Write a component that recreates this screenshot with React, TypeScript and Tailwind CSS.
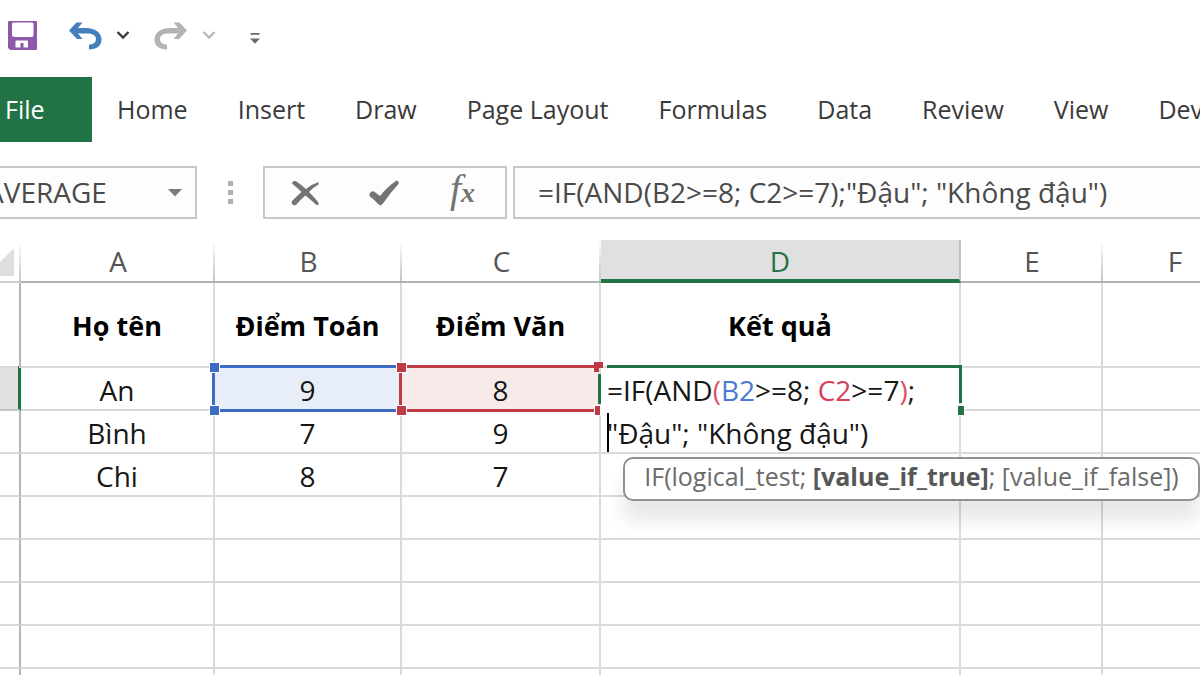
import type { ReactNode } from "react";

const tabs = ["Home", "Insert", "Draw", "Page Layout", "Formulas", "Data", "Review", "View", "Developer"];

const columns = ["A", "B", "C", "D", "E", "F"];

const students = [
  { name: "An", math: 9, literature: 8 },
  { name: "Bình", math: 7, literature: 9 },
  { name: "Chi", math: 8, literature: 7 },
];

const blankRows = [5, 6, 7, 8, 9, 10, 11, 12, 13, 14, 15, 16];

function Chevron({ className }: { className: string }) {
  return (
    <svg viewBox="0 0 14 10" className={`h-[10px] w-[14px] ${className}`} fill="none" stroke="currentColor" strokeWidth="2.4" aria-hidden="true">
      <path d="M1.500 1 7 6.500 12.500 1" />
    </svg>
  );
}

function CurvedArrow({ className }: { className: string }) {
  return (
    <svg viewBox="0 0 33 28" className={`h-7 w-[33px] ${className}`} fill="currentColor" aria-hidden="true">
      <path d="M0 8.500 7.500 0.500H13.500L9 6H17C26.500 6 32.500 11 32.500 17.500C32.500 24 27.500 27.500 20 27.500V22.500C24.500 22.500 27 20.500 27 17C27 13.500 24 11.500 17.500 11.500H9L13.500 17H8Z" />
    </svg>
  );
}

function QuickAccess() {
  return (
    <div className="flex h-[77px] shrink-0 items-center pb-[6px] pl-2">
      <button aria-label="Save" className="flex">
        <svg viewBox="0 0 29 29" className="size-[29px]" aria-hidden="true">
          <path fill="#8e58ab" fillRule="evenodd" d="M1 0h27a1 1 0 0 1 1 1v27a1 1 0 0 1-1 1H2.500L0 27V1a1 1 0 0 1 1-1ZM5.500 1.500Q4 1.500 4 3V14Q4 16 6 16H23.500Q25.500 16 25.500 14V3Q25.500 1.500 24 1.500ZM8.500 19.500Q7.500 19.500 7.500 20.500V26.500H12.500V22H15.500V26.500H20V20.500Q20 19.500 19 19.500Z" />
        </svg>
      </button>
      <button aria-label="Undo" className="ml-8 flex">
        <CurvedArrow className="text-[#447ebd]" />
      </button>
      <button aria-label="Undo history" className="ml-[14px] flex">
        <Chevron className="text-[#3b3b3b]" />
      </button>
      <button aria-label="Redo" className="ml-6 flex">
        <CurvedArrow className="-scale-x-100 text-[#b3b3b3]" />
      </button>
      <button aria-label="Redo history" className="ml-[15px] flex">
        <Chevron className="text-[#b9b9b9]" />
      </button>
      <button aria-label="Customize toolbar" className="ml-[34px] flex pt-[6px]">
        <svg viewBox="0 0 10 11" className="h-[11px] w-[10px]" fill="#6b6b6b" aria-hidden="true">
          <path d="M0.500 0h9v1.800h-9ZM0 5.500h10L5 10.800Z" />
        </svg>
      </button>
    </div>
  );
}

function Ribbon() {
  return (
    <nav className="flex h-[65px] shrink-0 items-stretch overflow-hidden text-[25px] text-[#3a3a3a]">
      <button className="w-[92px] shrink-0 bg-[#217346] pl-[5px] text-left text-white">File</button>
      {tabs.map((tab) => (
        <button key={tab} className="shrink-0 whitespace-nowrap px-[25px]">
          {tab}
        </button>
      ))}
    </nav>
  );
}

function FormulaBar() {
  return (
    <div className="mt-6 flex h-[53px] shrink-0 text-[28px] text-[#4a4a4a]">
      <div className="flex w-[197px] shrink-0 items-center justify-between overflow-hidden border-2 border-l-0 border-[#c8c8c8] bg-[#fdfdfd] pr-[13px]">
        <input aria-label="Name box" defaultValue="AVERAGE" className="-ml-[14px] w-[140px] bg-transparent pb-[2px] outline-none" />
        <button aria-label="Show names">
          <svg viewBox="0 0 14 8" className="h-2 w-[14px]" fill="#7a7a7a" aria-hidden="true">
            <path d="M0 0h14L7 7.500Z" />
          </svg>
        </button>
      </div>
      <div className="flex w-[66px] shrink-0 flex-col items-center justify-center gap-1">
        <span className="size-[5px] bg-[#b0b0b0]" />
        <span className="size-[5px] bg-[#b0b0b0]" />
        <span className="size-[5px] bg-[#b0b0b0]" />
      </div>
      <div className="flex w-[244px] shrink-0 items-center border-2 border-[#c8c8c8] bg-[#fdfdfd] pr-[3px] text-[#747474]">
        <button aria-label="Cancel" className="flex flex-1 justify-center">
          <svg viewBox="0 0 28 26" className="h-[26px] w-7" fill="currentColor" aria-hidden="true">
            <path d="M1 3.500C1.500 1 3.500 0.500 5.500 1.500Q10.500 5 15 9Q20 4.500 27.500 2V4.500Q22 7.500 18 12Q23 17 27.500 22.500V25H25.500Q20 20 14.500 15.500Q9 20 5.500 24.500Q3.500 26 1.500 24.500Q0 23 1 21Q6 16 10.500 12Q6 7.500 1 3.500Z" />
          </svg>
        </button>
        <button aria-label="Enter" className="flex flex-1 justify-center">
          <svg viewBox="0 0 30 26" className="h-[26px] w-[30px]" fill="currentColor" aria-hidden="true">
            <path d="M0.500 14Q1.500 10.500 5 11.500L11 16Q18 7 27.500 0.500Q30.500 1 29.500 4Q21 13 14 23.500L11.500 25.500L9 24Q5 19.500 0.500 16Z" />
          </svg>
        </button>
        <button aria-label="Insert function" className="flex flex-1 items-baseline justify-center pb-1 font-['Liberation_Serif',serif] italic">
          <span className="text-[40px] leading-9">f</span>
          <span className="text-[28px] font-bold leading-9">x</span>
        </button>
      </div>
      <input
        aria-label="Formula"
        defaultValue={'=IF(AND(B2>=8; C2>=7);"Đậu"; "Không đậu")'}
        className="ml-[6px] min-w-0 flex-1 border-2 border-r-0 border-[#c8c8c8] bg-[#fdfdfd] pb-[2px] pl-[23px] outline-none"
      />
    </div>
  );
}

function Handles({ color, right }: { color: string; right?: boolean }) {
  return (
    <>
      <span className={`absolute -left-[6px] -top-[6px] z-20 size-[11px] border border-white ${color}`} />
      <span className={`absolute -bottom-[7px] -left-[6px] z-20 size-[11px] border border-white ${color}`} />
      {right && (
        <>
          <span className={`absolute -right-1 -top-[6px] z-20 h-[6px] w-[9px] ${color}`} />
          <span className={`absolute right-0 -top-[6px] z-20 h-[10px] w-[5px] ${color}`} />
          <span className={`absolute -bottom-[7px] -right-[2px] z-20 h-[11px] w-[7px] border border-white ${color}`} />
        </>
      )}
    </>
  );
}

function Cell({ children, className = "" }: { children?: ReactNode; className?: string }) {
  return <td className={`relative border-b-2 border-r-2 border-[#dadada] p-0 pt-1 text-center ${className}`}>{children}</td>;
}

function RowHeader({ active = false }: { active?: boolean }) {
  return active ? (
    <th className="relative border-b-2 border-r-2 border-b-[#c4c4c4] border-r-[#217346] bg-[#e0e0e0] p-0">
      <span className="absolute -top-[2px] bottom-0 right-0 w-px bg-[#217346]" />
    </th>
  ) : (
    <th className="border-b-2 border-r-2 border-b-[#dadada] border-r-[#b5b5b5] p-0" />
  );
}

function CellEditor() {
  return (
    <>
      <div
        role="textbox"
        aria-label="Cell D2"
        className="absolute left-0 right-0 top-0 z-10 h-[84px] whitespace-nowrap bg-white pl-[6px] pt-px text-left leading-[43px]"
      >
        <div>
          =IF(AND<span className="text-[#e0526a]">(</span>
          <span className="text-[#4a7bd4]">B2</span>&gt;=8; <span className="text-[#d8405a]">C2</span>&gt;=7
          <span className="text-[#e0526a]">)</span>;
        </div>
        <div>"Đậu"; "Không đậu")</div>
        <span className="absolute bottom-0 left-[6px] h-[39px] w-[2px] bg-black" />
      </div>
      <span className="pointer-events-none absolute -right-[3px] -top-[3px] bottom-[6px] left-[6px] z-20 border-r-[3px] border-t-[3px] border-[#217346]" />
      <span className="absolute -left-[3px] bottom-[5px] top-[6px] z-20 w-[3px] bg-[#217346]" />
      <span className="absolute -bottom-[7px] -right-[6px] z-20 h-[11px] w-[8px] border border-white bg-[#217346]" />
      <div
        role="tooltip"
        className="absolute left-[22px] top-[89px] z-30 flex h-[44px] w-[577px] items-center justify-center whitespace-nowrap rounded-[10px] border-2 border-[#919191] bg-white pb-[5px] text-[25px] text-[#6b6b6b] shadow-[0_20px_18px_0_rgba(0,0,0,0.09)]"
      >
        <span>
          IF(logical_test; <b className="text-[#575757]">[value_if_true]</b>; [value_if_false])
        </span>
      </div>
    </>
  );
}

function Sheet() {
  return (
    <div className="mt-[21px] min-h-0 flex-1 overflow-hidden">
      <table className="w-full min-w-[1247px] table-fixed border-separate border-spacing-0 text-[28px] text-[#161616]">
        <colgroup>
          <col className="w-[21px]" />
          <col className="w-[194px]" />
          <col className="w-[187px]" />
          <col className="w-[199px]" />
          <col className="w-[360px]" />
          <col className="w-[142px]" />
          <col />
        </colgroup>
        <thead>
          <tr className="h-[43px] text-[#555]">
            <th className="relative border-b-2 border-[#cfcfcf] p-0">
              <svg viewBox="0 0 28 28" className="absolute bottom-[5px] right-[7px] size-7" aria-hidden="true">
                <path fill="#dedede" d="M28 0V28H0Z" />
              </svg>
              <span className="absolute bottom-0 right-0 top-0 w-[2px] bg-linear-to-b from-white to-[#c8c8c8]" />
            </th>
            {columns.map((column) =>
              column === "D" ? (
                <th key={column} className="relative border-b-[4px] border-r-2 border-b-[#217346] border-r-[#c0c0c0] bg-[#e0e0e0] p-0 pt-[2px] font-normal leading-[36px] text-[#217346]">
                  {column}
                </th>
              ) : (
                <th key={column} className="relative border-b-2 border-[#b2b2b2] p-0 font-normal leading-[40px]">
                  {column}
                  <span className="absolute bottom-0 right-0 top-0 w-[2px] bg-linear-to-b from-white to-[#c4c4c4]" />
                </th>
              ),
            )}
          </tr>
        </thead>
        <tbody>
          <tr className="h-[85px] text-[27px] font-bold text-black">
            <RowHeader />
            <Cell>Họ tên</Cell>
            <Cell>Điểm Toán</Cell>
            <Cell>Điểm Văn</Cell>
            <Cell>Kết quả</Cell>
            <Cell />
            <Cell />
          </tr>
          {students.map((student, index) => (
            <tr key={student.name} className="h-[43px] leading-[37px]">
              <RowHeader active={index === 0} />
              <Cell>{student.name}</Cell>
              <Cell className={index === 0 ? "bg-[#e8eef8]" : ""}>
                {student.math}
                {index === 0 && (
                  <>
                    <span className="absolute -bottom-[3px] -left-[3px] -top-[3px] right-0 z-10 border-[3px] border-r-0 border-[#3c6cc4]" />
                    <Handles color="bg-[#3c6cc4]" />
                  </>
                )}
              </Cell>
              <Cell className={index === 0 ? "bg-[#f9eaea]" : ""}>
                {student.literature}
                {index === 0 && (
                  <>
                    <span className="absolute -bottom-[3px] -left-[3px] -top-[3px] right-0 z-10 border-[3px] border-r-0 border-[#be3a46]" />
                    <Handles color="bg-[#be3a46]" right />
                  </>
                )}
              </Cell>
              <Cell>{index === 0 && <CellEditor />}</Cell>
              <Cell />
              <Cell />
            </tr>
          ))}
          {blankRows.map((row) => (
            <tr key={row} className="h-[43px]">
              <RowHeader />
              {columns.map((column) => (
                <Cell key={column} />
              ))}
            </tr>
          ))}
        </tbody>
      </table>
    </div>
  );
}

export default function App() {
  return (
    <main className="flex h-screen flex-col overflow-hidden bg-white font-['Open_Sans','Noto_Sans',sans-serif]">
      <QuickAccess />
      <Ribbon />
      <FormulaBar />
      <Sheet />
    </main>
  );
}
